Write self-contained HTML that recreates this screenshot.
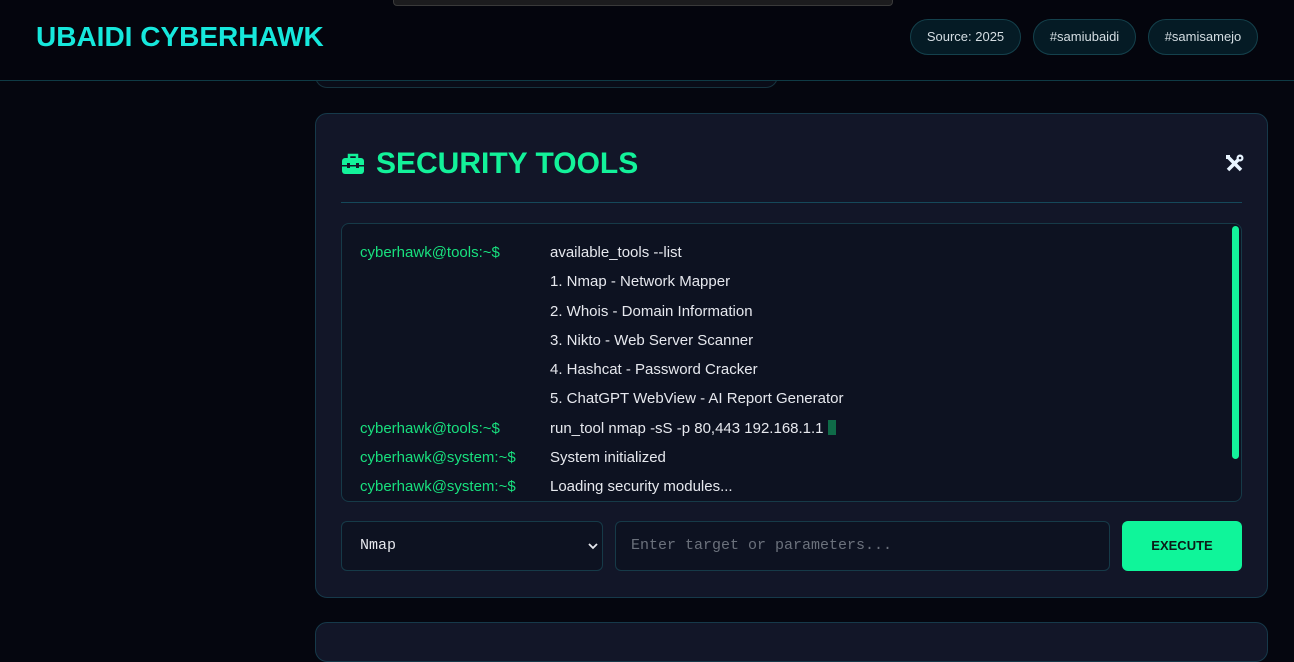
<!DOCTYPE html>
<html><head><meta charset="utf-8"><style>
*{box-sizing:border-box;margin:0;padding:0}
body{width:1294px;height:635px;overflow:hidden;background:#05060f;font-family:"Liberation Sans",sans-serif;position:relative}
.hdr{position:absolute;left:0;top:0;width:1294px;height:81px;border-bottom:1px solid #0f3a45;background:#04050d}
.logo{position:absolute;left:36px;top:21px;font-size:28px;font-weight:bold;color:#16e8dc}
.pill{position:absolute;top:19px;height:36px;border:1px solid #14414c;border-radius:18px;background:#051b25;color:#d4dde2;font-size:13px;line-height:34px;text-align:center}
.topbar{position:absolute;left:393px;top:-4px;width:500px;height:10px;background:#1c1c1e;border:1px solid #3a3a3a;border-radius:0 0 4px 4px}
.upcard{position:absolute;left:315px;top:40px;width:463px;height:48px;border:1px solid #16333f;border-top:none;border-radius:0 0 12px 12px;background:#0a0c18}
.card{position:absolute;left:315px;top:113px;width:953px;height:485px;background:#121628;border:1px solid #16394a;border-radius:12px}
.title{position:absolute;left:60px;top:33px;font-size:30px;font-weight:bold;color:#13f29a}
.div{position:absolute;left:25px;top:88px;width:901px;height:1px;background:#15485a}
.term{position:absolute;left:25px;top:109px;width:901px;height:279px;background:#0d1221;border:1px solid #163a48;border-radius:8px;overflow:hidden}
.ln{position:absolute;font-size:15px;color:#e6e8ee}
.p{left:18px;color:#18e07e}
.c{left:208px}
.sb{position:absolute;right:2px;top:2px;width:7px;height:233px;background:#13f29a;border-radius:4px}
.sel{position:absolute;left:25px;top:407px;width:262px;height:50px;background:#0d1221;border:1px solid #163a48;border-radius:6px;color:#e6e8ee;font-size:15px;line-height:48px;padding-left:18px;font-family:"Liberation Mono",monospace}
.inp{position:absolute;left:299px;top:407px;width:495px;height:50px;background:#0d1221;border:1px solid #163a48;border-radius:6px;color:#6b717c;font-size:15px;line-height:48px;padding-left:15px;font-family:"Liberation Mono",monospace}
.btn{position:absolute;left:806px;top:407px;width:120px;height:50px;background:#0ff59a;border-radius:6px;color:#0b1c18;font-size:13px;font-weight:bold;line-height:50px;text-align:center}
.bot{position:absolute;left:315px;top:622px;width:953px;height:40px;background:#121628;border:1px solid #16394a;border-radius:12px}
</style></head><body>
<div class="upcard"></div>
<div class="hdr">
<div class="logo">UBAIDI CYBERHAWK</div>
<div class="pill" style="left:910px;width:111px">Source: 2025</div>
<div class="pill" style="left:1033px;width:103px">#samiubaidi</div>
<div class="pill" style="left:1148px;width:110px">#samisamejo</div>
</div>
<div class="topbar"></div>
<div class="card">
<svg style="position:absolute;left:25px;top:39px" width="24" height="22" viewBox="0 0 24 22"><path d="M8 5V2h8v3" fill="none" stroke="#13f29a" stroke-width="2.5"/><rect x="1" y="5" width="22" height="16" rx="3" fill="#13f29a"/><rect x="1" y="12" width="22" height="1.5" fill="#121628"/><rect x="6" y="10" width="3" height="5" fill="#121628"/><rect x="15" y="10" width="3" height="5" fill="#121628"/></svg>
<div class="title">SECURITY TOOLS</div>
<svg style="position:absolute;left:909px;top:40px" width="19" height="19" viewBox="0 0 19 19"><path d="M3 3l13 13" stroke="#e8f4ff" stroke-width="3.5"/><path d="M16 3L3 16" stroke="#e8f4ff" stroke-width="3.5"/><circle cx="15" cy="4" r="3.5" fill="#e8f4ff"/><circle cx="15" cy="4" r="1.3" fill="#121628"/><rect x="1" y="1" width="4" height="4" fill="#e8f4ff"/></svg>
<div class="div"></div>
<div class="term">
<div class="ln p" style="top:20px">cyberhawk@tools:~$</div><div class="ln c" style="top:20px">available_tools --list</div>
<div class="ln c" style="top:49px">1. Nmap - Network Mapper</div>
<div class="ln c" style="top:79px">2. Whois - Domain Information</div>
<div class="ln c" style="top:108px">3. Nikto - Web Server Scanner</div>
<div class="ln c" style="top:137px">4. Hashcat - Password Cracker</div>
<div class="ln c" style="top:166px">5. ChatGPT WebView - AI Report Generator</div>
<div class="ln p" style="top:196px">cyberhawk@tools:~$</div><div class="ln c" style="top:196px">run_tool nmap -sS -p 80,443 192.168.1.1 <span style="display:inline-block;width:8px;height:15px;background:#0f6b48;vertical-align:-2px"></span></div>
<div class="ln p" style="top:225px">cyberhawk@system:~$</div><div class="ln c" style="top:225px">System initialized</div>
<div class="ln p" style="top:254px">cyberhawk@system:~$</div><div class="ln c" style="top:254px">Loading security modules...</div>
<div class="sb"></div>
</div>
<div class="sel">Nmap<svg style="position:absolute;right:4px;top:20px" width="10" height="8" viewBox="0 0 10 8"><path d="M1 2l4 4 4-4" fill="none" stroke="#e6e8ee" stroke-width="1.8"/></svg></div>
<div class="inp">Enter target or parameters...</div>
<div class="btn">EXECUTE</div>
</div>
<div class="bot"></div>
</body></html>
